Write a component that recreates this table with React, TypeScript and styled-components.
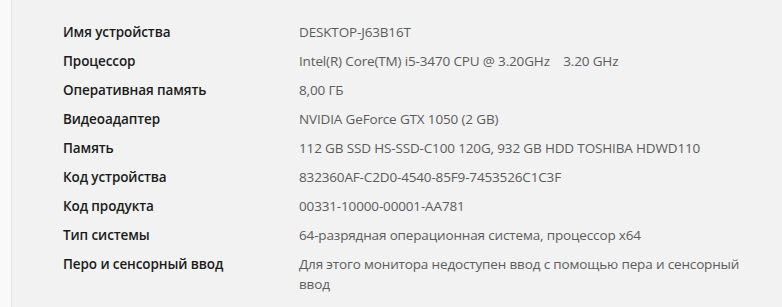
import { FC } from "react";
import styled, { createGlobalStyle } from "styled-components";

interface Spec {
  label: string;
  value: string;
}

const specs: Spec[] = [
  { label: "Имя устройства", value: "DESKTOP-J63B16T" },
  { label: "Процессор", value: "Intel(R) Core(TM) i5-3470 CPU @ 3.20GHz    3.20 GHz" },
  { label: "Оперативная память", value: "8,00 ГБ" },
  { label: "Видеоадаптер", value: "NVIDIA GeForce GTX 1050 (2 GB)" },
  { label: "Память", value: "112 GB SSD HS-SSD-C100 120G, 932 GB HDD TOSHIBA HDWD110" },
  { label: "Код устройства", value: "832360AF-C2D0-4540-85F9-7453526C1C3F" },
  { label: "Код продукта", value: "00331-10000-00001-AA781" },
  { label: "Тип системы", value: "64-разрядная операционная система, процессор x64" },
  {
    label: "Перо и сенсорный ввод",
    value: "Для этого монитора недоступен ввод с помощью пера и сенсорный ввод",
  },
];

const App: FC = () => {
  return (
    <>
      <GlobalStyle />
      <Page>
        <Card>
          <SpecList>
            {specs.map((spec) => (
              <Row key={spec.label}>
                <Label>{spec.label}</Label>
                <Value>{spec.value}</Value>
              </Row>
            ))}
          </SpecList>
        </Card>
      </Page>
    </>
  );
};

const GlobalStyle = createGlobalStyle`
  html, body {
    margin: 0;
    padding: 0;
    background: #f9f9f9;
  }

  body {
    font-family: "Open Sans", "Noto Sans", sans-serif;
  }
`;

const Page = styled.div`
  height: 307px;
  padding-left: 11px;
  display: flex;
  overflow: hidden;
`;

const Card = styled.div`
  flex: 1;
  background: #f2f2f2;
  border-left: 1px solid #e3e3e3;
  padding: 22px 0 0 51px;
`;

const SpecList = styled.div`
  display: flex;
  flex-direction: column;
  gap: 9px;
`;

const Row = styled.div`
  display: grid;
  grid-template-columns: 236px 450px;
  align-items: start;
`;

const Label = styled.span`
  font-size: 13.5px;
  line-height: 20px;
  font-weight: 600;
  color: #1b1b1b;
  letter-spacing: -0.1px;
`;

const Value = styled.span`
  font-size: 13.5px;
  line-height: 20px;
  color: #5c5c5c;
  white-space: pre-wrap;
  letter-spacing: -0.15px;
`;

export default App;
